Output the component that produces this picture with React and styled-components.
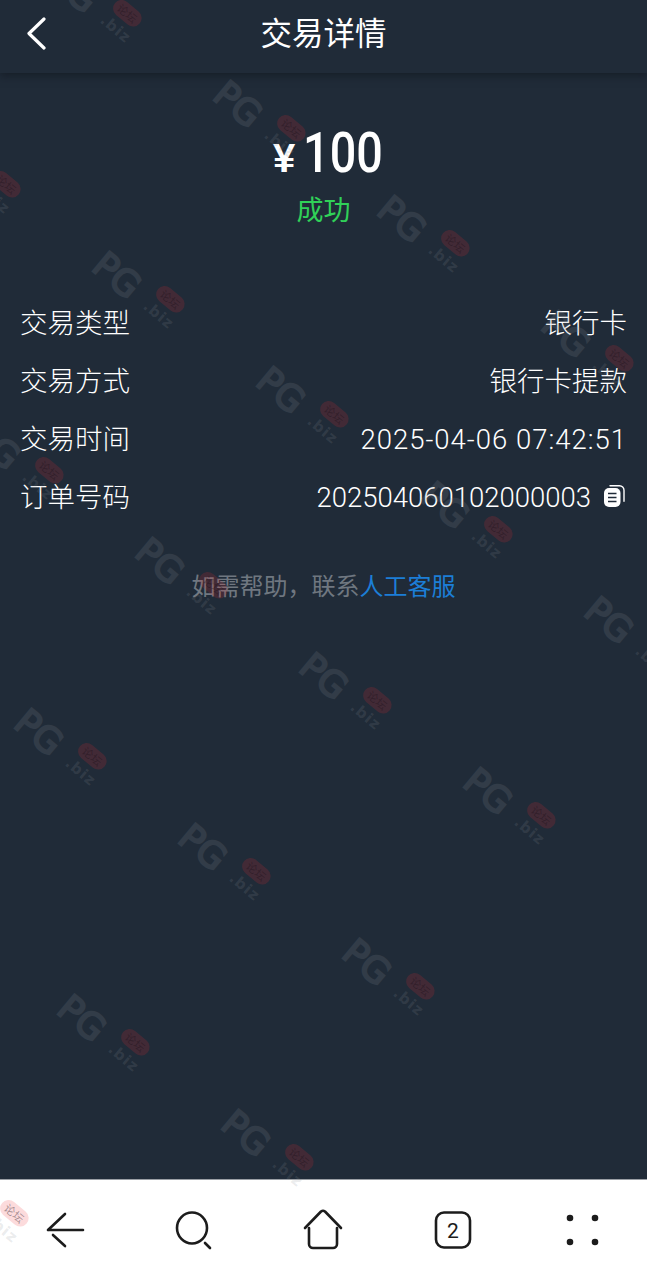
import React from 'react';
import styled, { createGlobalStyle } from 'styled-components';

const GlobalStyle = createGlobalStyle`
  html, body { margin: 0; padding: 0; background: #202b38; }
  body { font-family: 'Roboto', 'Noto Sans CJK SC', sans-serif; }
`;

const Page = styled.div`
  position: relative;
  width: 647px;
  height: 1280px;
  overflow: hidden;
  display: flex;
  flex-direction: column;
  background: #202b38;
`;

const Header = styled.header`
  height: 73px;
  flex: none;
  display: flex;
  align-items: center;
  justify-content: center;
  position: relative;
  background: #202b38;
  box-shadow: 0 3px 8px rgba(15, 20, 28, 0.55);
  padding-bottom: 12px;
  box-sizing: border-box;
`;

const BackButton = styled.button`
  position: absolute;
  left: 24px;
  top: 16px;
  width: 26px;
  height: 34px;
  padding: 0;
  border: none;
  background: none;
  color: #fff;
`;

const Title = styled.h1`
  margin: 0;
  font-family: 'Noto Sans CJK SC', sans-serif;
  font-size: 31.5px;
  font-weight: 400;
  color: #fff;
`;

const Content = styled.main`
  flex: 1;
  display: flex;
  flex-direction: column;
`;

const Summary = styled.section`
  display: flex;
  flex-direction: column;
  align-items: center;
  padding-top: 46px;
`;

const Amount = styled.div`
  display: flex;
  align-items: baseline;
  height: 68px;
  margin-left: 9px;
  color: #fff;
`;

const Currency = styled.span`
  font-family: 'Liberation Sans', sans-serif;
  font-size: 40px;
  font-weight: 700;
`;

const Value = styled.span`
  display: inline-block;
  margin-left: -6px;
  font-family: 'Roboto', sans-serif;
  font-size: 55px;
  font-weight: 500;
  line-height: 68px;
  transform: scaleX(0.85);
  transform-origin: 100% 50%;
`;

const Status = styled.div`
  margin-top: 4px;
  font-family: 'Noto Sans CJK SC', sans-serif;
  font-size: 27px;
  line-height: 36px;
  color: #30d158;
`;

const Rows = styled.dl`
  margin: 68px 0 0;
  padding: 0 20px;
  display: flex;
  flex-direction: column;
`;

const Row = styled.div`
  display: flex;
  align-items: baseline;
  justify-content: space-between;
  height: 58px;
  line-height: 58px;
  color: #fff;
  font-size: 27.5px;
  font-weight: 300;
  font-family: 'Roboto', 'Noto Sans CJK SC', sans-serif;
`;

const Label = styled.dt`
  margin: 0;
`;

const Detail = styled.dd`
  margin: 0;
  display: flex;
  align-items: center;
  gap: 13px;
  letter-spacing: ${(p) => (p.$wide ? '1px' : '0')};
`;

const CopyGlyph = styled.svg`
  width: 21px;
  height: 22px;
  margin: 0 2px 4px 0;
  flex: none;
`;

const Help = styled.p`
  margin: 41px 0 0;
  text-align: center;
  font-family: 'Noto Sans CJK SC', sans-serif;
  font-size: 24px;
  line-height: 34px;
  color: #6f7780;
`;

const HelpLink = styled.a`
  color: #1c7ed6;
`;

const BottomBar = styled.nav`
  flex: none;
  height: 101px;
  display: grid;
  grid-template-columns: repeat(5, 1fr);
  align-items: center;
  justify-items: center;
  background: #fff;
  border-top: 1px solid #9a9fa5;
  box-sizing: border-box;
`;

const NavIcon = styled.svg`
  width: 44px;
  height: 44px;
  fill: none;
  stroke: #1c1c1c;
  stroke-width: 2.6;
  stroke-linecap: round;
  stroke-linejoin: round;
`;

const TabCount = styled.text`
  font-family: 'Roboto', sans-serif;
  font-size: 21px;
  font-weight: 400;
  fill: #1c1c1c;
  stroke: none;
  text-anchor: middle;
`;

const Watermarks = styled.div`
  position: absolute;
  inset: 0;
  pointer-events: none;
`;

const Mark = styled.div`
  position: absolute;
  width: 100px;
  height: 30px;
  transform-origin: 0 0;
  transform: rotate(40deg);
`;

const MarkLetters = styled.span`
  position: absolute;
  left: -3px;
  top: -4px;
  font-family: 'DejaVu Sans', sans-serif;
  font-size: 36px;
  line-height: 36px;
  color: #8a8f96;
  -webkit-text-stroke: 2px #8a8f96;
  opacity: 0.17;
`;

const MarkBadge = styled.span`
  position: absolute;
  left: 62px;
  top: -11px;
  width: 32px;
  height: 17px;
  border-radius: 8.5px;
  background: rgba(235, 40, 50, 0.17);
  color: rgba(25, 15, 25, 0.4);
  font-family: 'Noto Sans CJK SC', sans-serif;
  font-size: 11px;
  line-height: 17px;
  text-align: center;
`;

const MarkDomain = styled.span`
  position: absolute;
  left: 62px;
  top: 9px;
  font-family: 'DejaVu Sans', sans-serif;
  font-weight: 700;
  font-size: 15px;
  line-height: 16px;
  letter-spacing: 1px;
  color: rgba(138, 143, 150, 0.18);
`;

// watermark lattice, every mark is one of these two steps from the next
const markPositions = [];
for (let a = -1; a <= 3; a++) {
  for (let b = 0; b <= 7; b++) {
    const x = 230 + a * 164 - b * 121;
    const y = 80 + a * 115 + b * 171;
    if (x > -110 && x < 647 && y < 1280) markPositions.push({ x, y });
  }
}

const rows = [
  { label: '交易类型', value: '银行卡' },
  { label: '交易方式', value: '银行卡提款' },
  { label: '交易时间', value: '2025-04-06 07:42:51', wide: true },
  { label: '订单号码', value: '202504060102000003', copy: true },
];

const CopyIcon = () => (
  <CopyGlyph viewBox="0 0 21 22">
    <path d="M6 .8h9.500a4.500 4.500 0 0 1 4.500 4.500v11" fill="none" stroke="#fff" strokeWidth="1.4" strokeLinecap="round" />
    <rect x="0" y="3" width="16.500" height="19" rx="5" fill="#fff" />
    <path d="M4 8.500h8.500M4 12.500h8.500M4 16.500h8.500" stroke="#202b38" strokeWidth="1.700" />
  </CopyGlyph>
);

const App = () => (
  <Page>
    <GlobalStyle />
    <Header>
      <BackButton aria-label="返回">
        <svg width="26" height="34" viewBox="0 0 26 34" fill="none" stroke="currentColor" strokeWidth="3.2" strokeLinecap="round" strokeLinejoin="round">
          <path d="M20 3 5 17.500 20 32" />
        </svg>
      </BackButton>
      <Title>交易详情</Title>
    </Header>
    <Content>
      <Summary>
        <Amount>
          <Currency>¥</Currency>
          <Value>100</Value>
        </Amount>
        <Status>成功</Status>
      </Summary>
      <Rows>
        {rows.map((row) => (
          <Row key={row.label}>
            <Label>{row.label}</Label>
            <Detail $wide={row.wide}>
              {row.value}
              {row.copy && <CopyIcon />}
            </Detail>
          </Row>
        ))}
      </Rows>
      <Help>
        如需帮助，联系<HelpLink>人工客服</HelpLink>
      </Help>
    </Content>
    <BottomBar>
      <NavIcon viewBox="0 0 44 44">
        <path d="M40 22H5M22 6 5 22M22 38 10 27" />
      </NavIcon>
      <NavIcon viewBox="0 0 44 44">
        <ellipse cx="20" cy="20" rx="15" ry="15.500" />
        <path d="M33 35l5 5" />
      </NavIcon>
      <NavIcon viewBox="0 0 44 44">
        <path d="M4 20 20 3.500Q22 2 24 3.500L40 20" />
        <path d="M8 20v16a4 4 0 0 0 4 4h20a4 4 0 0 0 4-4V20" />
      </NavIcon>
      <NavIcon viewBox="0 0 44 44">
        <rect x="5" y="4.500" width="34" height="35" rx="8" />
        <TabCount x="22" y="29.500">2</TabCount>
      </NavIcon>
      <NavIcon viewBox="0 0 44 44">
        <circle cx="10" cy="10" r="2" fill="#1c1c1c" />
        <circle cx="35" cy="10" r="2" fill="#1c1c1c" />
        <circle cx="10" cy="34" r="2" fill="#1c1c1c" />
        <circle cx="35" cy="34" r="2" fill="#1c1c1c" />
      </NavIcon>
    </BottomBar>
    <Watermarks>
      {markPositions.map((p) => (
        <Mark key={`${p.x}-${p.y}`} style={{ left: p.x, top: p.y }}>
          <MarkLetters>PG</MarkLetters>
          <MarkBadge>论坛</MarkBadge>
          <MarkDomain>.biz</MarkDomain>
        </Mark>
      ))}
    </Watermarks>
  </Page>
);

export default App;
